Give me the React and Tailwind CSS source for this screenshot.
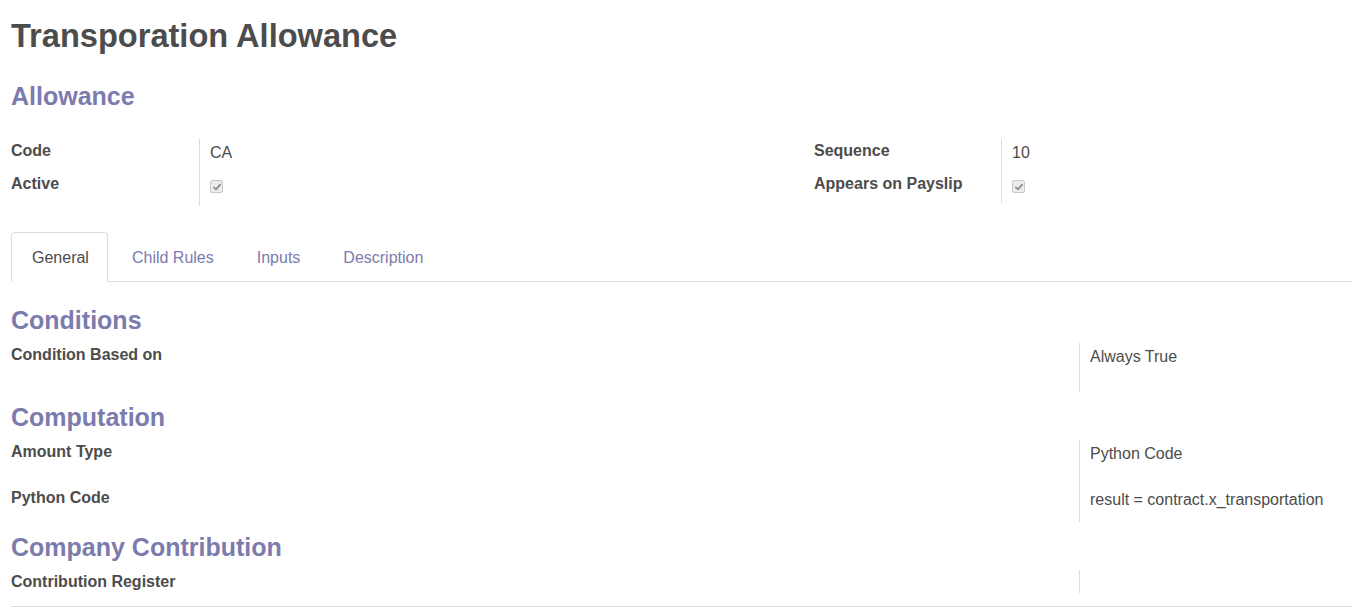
import React from 'react';

const purple = 'text-[#7c7bad]';

function Check() {
  return (
    <span className="mt-[6px] flex h-[13px] w-[13px] items-center justify-center rounded-[2px] border border-[#c8c8c8] bg-[#ececec]">
      <svg viewBox="0 0 12 12" className="h-[10px] w-[10px]">
        <path d="M2.2 6.4 L4.8 8.8 L9.8 3.2" fill="none" stroke="#8a8a8a" strokeWidth="2" strokeLinecap="round" strokeLinejoin="round" />
      </svg>
    </span>
  );
}

function Row({ label, children, labelWidth = 'w-[189px]', height }) {
  return (
    <div className={`flex ${height}`}>
      <div className={`${labelWidth} shrink-0 border-r border-[#dcdcdc] font-bold leading-6`}>{label}</div>
      <div className="pl-[10px] pt-[2px] leading-6">{children}</div>
    </div>
  );
}

function SectionTitle({ children, className = '' }) {
  return <h2 className={`text-[25px] font-bold leading-[30px] ${purple} ${className}`}>{children}</h2>;
}

const tabs = ['General', 'Child Rules', 'Inputs', 'Description'];

export default function App() {
  return (
    <div className="min-h-[611px] bg-white pl-[11px] text-[16px] text-[#4c4c4c] [font-family:'Liberation_Sans',Arial,sans-serif]">
      <h1 className="pt-[18px] text-[32.6px] font-bold leading-[36px] text-[#4c4c4c]">Transporation Allowance</h1>

      <SectionTitle className="mt-[27px]">Allowance</SectionTitle>

      <div className="mt-[28px] flex">
        <div className="w-[803px] shrink-0">
          <Row label="Code" height="h-[33px]">CA</Row>
          <Row label="Active" height="h-[34px]">
            <Check />
          </Row>
        </div>
        <div className="flex-1">
          <Row label="Sequence" labelWidth="w-[188px]" height="h-[33px]">10</Row>
          <Row label="Appears on Payslip" labelWidth="w-[188px]" height="h-[31px]">
            <Check />
          </Row>
        </div>
      </div>

      <div className="mt-[26px] flex border-b border-[#dddddd]">
        {tabs.map((t, i) => (
          <div
            key={t}
            className={`-mb-px mr-[3px] h-[50px] border pl-[20px] pr-[18px] pt-[13px] leading-6 ${
              i === 0
                ? 'rounded-t-[4px] border-[#dddddd] border-b-white bg-white text-[#4c4c4c]'
                : 'border-transparent text-[#7c7bad]'
            }`}
          >
            {t}
          </div>
        ))}
      </div>

      <SectionTitle className="mt-[23px]">Conditions</SectionTitle>
      <div className="mt-[8px]">
        <Row label="Condition Based on" labelWidth="w-[1069px]" height="h-[49px]">Always True</Row>
      </div>

      <SectionTitle className="mt-[10px]">Computation</SectionTitle>
      <div className="mt-[8px]">
        <Row label="Amount Type" labelWidth="w-[1069px]" height="h-[46px]">Python Code</Row>
        <Row label="Python Code" labelWidth="w-[1069px]" height="h-[36px]">
          <span className="whitespace-nowrap">result = contract.x_transportation</span>
        </Row>
      </div>

      <SectionTitle className="mt-[10px]">Company Contribution</SectionTitle>
      <div className="mt-[8px]">
        <Row label="Contribution Register" labelWidth="w-[1069px]" height="h-[23px]" />
      </div>

      <div className="mt-[13px] h-px bg-[#dddddd]" />
    </div>
  );
}
